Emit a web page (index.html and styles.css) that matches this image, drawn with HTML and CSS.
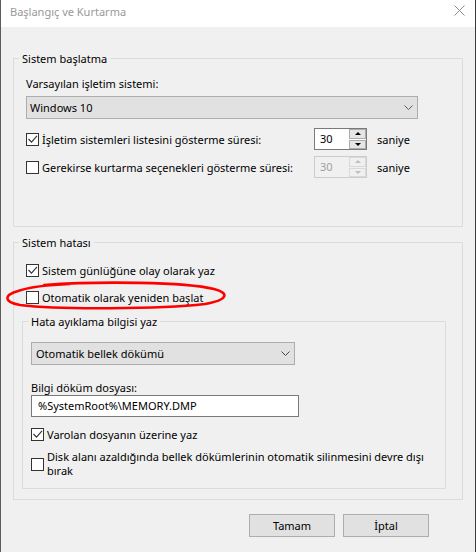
FILE: index.html
```html
<!DOCTYPE html>
<html lang="tr">
<head>
<meta charset="utf-8">
<title>Başlangıç ve Kurtarma</title>
<link rel="stylesheet" href="styles.css">
</head>
<body>
<div class="window">
  <div class="titlebar">
    <span class="title">Başlangıç ve Kurtarma</span>
    <svg class="close" width="11" height="11" viewBox="0 0 11 11"><path d="M0.5 0.5 L10.5 10.5 M10.5 0.5 L0.5 10.5" stroke="#8a8a8a" stroke-width="1" fill="none"/></svg>
  </div>
  <div class="content">
    <fieldset class="group group-startup">
      <legend>Sistem başlatma</legend>
      <div class="label indent">Varsayılan işletim sistemi:</div>
      <div class="select select-os indent">
        <span>Windows 10</span>
        <svg class="chev" width="9" height="5" viewBox="0 0 9 5"><polyline points="0.5,0.5 4.5,4.5 8.5,0.5" stroke="#5a5a5a" stroke-width="1" fill="none"/></svg>
      </div>
      <div class="timer-row indent row-first">
        <label class="check timer-label">
          <span class="box"><svg width="11" height="11" viewBox="0 0 11 11"><polyline points="1.5,5 4.5,8.2 10,1.8" stroke="#333" stroke-width="1.1" fill="none"/></svg></span>
          <span>İşletim sistemleri listesini gösterme süresi:</span>
        </label>
        <div class="spin">
          <span class="spin-val">30</span>
          <span class="spin-btns"><span class="spin-btn"><i class="tri-up"></i></span><span class="spin-btn"><i class="tri-down"></i></span></span>
        </div>
        <span class="unit">saniye</span>
      </div>
      <div class="timer-row indent row-second">
        <label class="check timer-label">
          <span class="box"></span>
          <span>Gerekirse kurtarma seçenekleri gösterme süresi:</span>
        </label>
        <div class="spin disabled">
          <span class="spin-val">30</span>
          <span class="spin-btns"><span class="spin-btn"><i class="tri-up"></i></span><span class="spin-btn"><i class="tri-down"></i></span></span>
        </div>
        <span class="unit">saniye</span>
      </div>
    </fieldset>

    <fieldset class="group group-failure">
      <legend>Sistem hatası</legend>
      <label class="check indent">
        <span class="box"><svg width="11" height="11" viewBox="0 0 11 11"><polyline points="1.5,5 4.5,8.2 10,1.8" stroke="#333" stroke-width="1.1" fill="none"/></svg></span>
        <span>Sistem günlüğüne olay olarak yaz</span>
      </label>
      <label class="check indent restart-row">
        <span class="box"></span>
        <span>Otomatik olarak yeniden başlat</span>
      </label>

      <fieldset class="group group-debug">
        <legend>Hata ayıklama bilgisi yaz</legend>
        <div class="select select-dump inner">
          <span>Otomatik bellek dökümü</span>
          <svg class="chev" width="9" height="5" viewBox="0 0 9 5"><polyline points="0.5,0.5 4.5,4.5 8.5,0.5" stroke="#444" stroke-width="1" fill="none"/></svg>
        </div>
        <div class="label inner dump-label">Bilgi döküm dosyası:</div>
        <div class="textbox inner">%SystemRoot%\MEMORY.DMP</div>
        <label class="check inner overwrite-row">
          <span class="box"><svg width="11" height="11" viewBox="0 0 11 11"><polyline points="1.5,5 4.5,8.2 10,1.8" stroke="#333" stroke-width="1.1" fill="none"/></svg></span>
          <span>Varolan dosyanın üzerine yaz</span>
        </label>
        <label class="check inner disk-row">
          <span class="box"></span>
          <span class="multi">Disk alanı azaldığında bellek dökümlerinin otomatik silinmesini devre dışı<br>bırak</span>
        </label>
      </fieldset>
    </fieldset>

    <div class="buttons">
      <button class="btn">Tamam</button>
      <button class="btn">İptal</button>
    </div>
  </div>

  <svg class="annotation" width="476" height="552" viewBox="0 0 476 552">
    <path d="M44 285 C 100 281, 185 282, 214 289 C 230 293, 228 300, 205 304 C 160 309, 60 310, 20 305 C 3 302, 4 295, 18 291 C 30 287, 42 285, 70 284" stroke="#f00" stroke-width="2.6" fill="none" stroke-linecap="round"/>
  </svg>
</div>
</body>
</html>
```

FILE: styles.css
```css
* { box-sizing: border-box; }

html, body {
  margin: 0;
  padding: 0;
  background: #f0f0f0;
}

body {
  font-family: "Noto Sans", "Open Sans", sans-serif;
  font-size: 11px;
  line-height: 15px;
  color: #000;
}

.window {
  position: relative;
  width: 476px;
  height: 552px;
  display: flex;
  flex-direction: column;
  background: #f0f0f0;
  border-left: 1px solid #5c5c5c;
  border-right: 1px solid #3a3a3a;
  overflow: hidden;
}

.titlebar {
  height: 27px;
  flex: none;
  background: #fff;
  display: flex;
  align-items: flex-start;
  padding-left: 9px;
}

.title {
  margin-top: 4px;
  line-height: 16px;
  color: #999;
}

.close {
  margin-left: auto;
  margin-right: 10px;
  margin-top: 5px;
}

.content {
  flex: 1;
  padding: 24px 12px 0 12px;
}

.group {
  margin: 0;
  border: 1px solid #dcdcdc;
  padding: 0 0 0 5px;
  min-width: 0;
}

.group legend {
  padding: 0 3px;
  line-height: 15px;
}

.group-startup {
  padding-top: 10px;
  padding-bottom: 48px;
}

.group-failure {
  margin-top: 8px;
  padding-top: 13px;
  padding-bottom: 10px;
}

.group-debug {
  margin: 9px 0 0 3px;
  width: 424px;
  padding-top: 13px;
  padding-bottom: 10px;
}

.indent { margin-left: 7px; }
.inner { margin-left: 3px; }

.label { line-height: 15px; }

.select {
  height: 23px;
  background: #e1e1e1;
  border: 1px solid #adadad;
  display: flex;
  align-items: center;
  justify-content: space-between;
  padding: 0 4px 0 4px;
}

.select-os {
  margin-top: 5px;
  width: 392px;
  padding-left: 3px;
}

.select-dump { width: 264px; }

.timer-row {
  display: flex;
  align-items: center;
  height: 22px;
}

.row-first { margin-top: 9px; }
.row-second { margin-top: 6px; }

.check {
  display: flex;
  align-items: center;
  gap: 3px;
  line-height: 15px;
}

.timer-label { width: 288px; }

.box {
  width: 13px;
  height: 13px;
  flex: none;
  background: #fff;
  border: 1px solid #333;
  display: flex;
  align-items: center;
  justify-content: center;
}

.box svg { display: block; }

.spin {
  width: 53px;
  height: 22px;
  display: flex;
  border: 1px solid #7a7a7a;
  background: #fff;
}

.spin-val {
  flex: 1;
  padding-left: 5px;
  line-height: 19px;
}

.spin-btns {
  width: 17px;
  display: flex;
  flex-direction: column;
  gap: 1px;
  padding: 0;
}

.spin-btn {
  flex: 1;
  background: #e5e5e5;
  border: 1px solid #acacac;
  display: flex;
  align-items: center;
  justify-content: center;
}

.tri-up, .tri-down {
  width: 0;
  height: 0;
  border-left: 3px solid transparent;
  border-right: 3px solid transparent;
}

.tri-up { border-bottom: 3px solid #000; }
.tri-down { border-top: 3px solid #000; }

.spin.disabled {
  border-color: #cccccc;
  background: #f0f0f0;
  color: #a0a0a0;
}

.spin.disabled .spin-btn {
  background: #f0f0f0;
  border-color: #d9d9d9;
}

.spin.disabled .tri-up { border-bottom-color: #bfbfbf; }
.spin.disabled .tri-down { border-top-color: #bfbfbf; }

.unit { margin-left: 10px; }

.restart-row { margin-top: 12px; }

.dump-label { margin-top: 15px; }

.textbox {
  width: 268px;
  height: 22px;
  background: #fff;
  border: 1px solid #7a7a7a;
  padding-left: 6px;
  line-height: 20px;
}

.overwrite-row { margin-top: 10px; }

.disk-row { margin-top: 8px; }

.multi { line-height: 14px; }

.buttons {
  display: flex;
  justify-content: flex-end;
  gap: 8px;
  margin-top: 14px;
  margin-right: 34px;
}

.btn {
  width: 86px;
  height: 23px;
  background: #e1e1e1;
  border: 1px solid #adadad;
  font: inherit;
  color: #000;
  padding: 0;
}

.annotation {
  position: absolute;
  left: -1px;
  top: 0;
  pointer-events: none;
}
```
